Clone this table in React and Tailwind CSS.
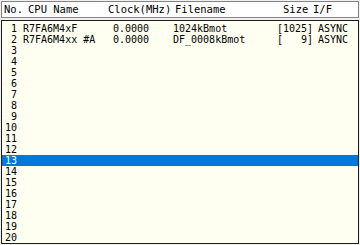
import React from "react";

const mono = { fontFamily: '"DejaVu Sans Mono", "Liberation Mono", monospace' };

const entries = {
  1: { cpu: "R7FA6M4xF", clock: "0.0000", file: "1024kBmot", size: 1025, iface: "ASYNC" },
  2: { cpu: "R7FA6M4xx #A", clock: "0.0000", file: "DF_0008kBmot", size: 9, iface: "ASYNC" },
};

const SELECTED = 13;

function sizeLabel(n) {
  return "[" + String(n).padStart(4, " ") + "]";
}

function Row({ no }) {
  const e = entries[no];
  const selected = no === SELECTED;
  return (
    <div
      className={`flex h-[11px] items-center whitespace-pre text-[10px] leading-[11px] ${
        selected ? "bg-[#0078d7] text-white" : "text-black"
      }`}
    >
      <span className="w-[15px] shrink-0 text-right">{no}</span>
      <span className="w-[6px] shrink-0" />
      <span className="w-[90px] shrink-0">{e ? e.cpu : ""}</span>
      <span className="w-[60px] shrink-0">{e ? e.clock : ""}</span>
      <span className="w-[104px] shrink-0">{e ? e.file : ""}</span>
      <span className="w-[41px] shrink-0">{e ? sizeLabel(e.size) : ""}</span>
      <span className="shrink-0">{e ? e.iface : ""}</span>
    </div>
  );
}

export default function App() {
  const rows = Array.from({ length: 20 }, (_, i) => i + 1);
  return (
    <div className="w-[360px] h-[245px] bg-[#f0f0f0] pt-px pl-px overflow-hidden" style={mono}>
      {/* Column headers */}
      <div className="flex h-[17px] w-[358px] items-center border border-[#828282] bg-white text-[10.5px] text-black whitespace-pre">
        <span className="w-[26px] shrink-0 pl-[2px]">No.</span>
        <span className="w-[80px] shrink-0">CPU Name</span>
        <span className="w-[67px] shrink-0">Clock(MHz)</span>
        <span className="w-[108px] shrink-0">Filename</span>
        <span className="w-[30px] shrink-0">Size</span>
        <span className="shrink-0">I/F</span>
      </div>

      {/* Device list */}
      <div className="mt-[2px] h-[224px] w-[358px] border border-[#1c1c1c] bg-[#fefff0] pt-[2px] box-border">
        {rows.map((n) => (
          <Row key={n} no={n} />
        ))}
      </div>
    </div>
  );
}
